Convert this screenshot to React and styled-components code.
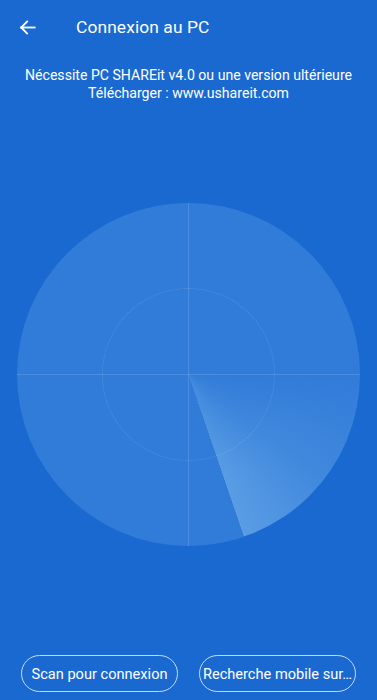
import styled, { createGlobalStyle } from "styled-components";

const GlobalStyle = createGlobalStyle`
  html, body {
    margin: 0;
    padding: 0;
    background: #1a69d1;
  }
  * { box-sizing: border-box; }
`;

const Screen = styled.div`
  width: 377px;
  height: 700px;
  background: #1a69d1;
  color: #fff;
  font-family: Roboto, "Noto Sans", sans-serif;
  display: flex;
  flex-direction: column;
  overflow: hidden;
`;

const Toolbar = styled.div`
  height: 54px;
  display: flex;
  align-items: center;
  padding-left: 16px;
`;

const BackButton = styled.button`
  width: 22px;
  height: 22px;
  padding: 0;
  border: none;
  background: none;
  color: #fff;
  display: flex;
  align-items: center;
  justify-content: center;
`;

const Title = styled.h1`
  margin: 0 0 0 38px;
  font-size: 17.4px;
  font-weight: 400;
  letter-spacing: 0.1px;
`;

const Info = styled.p`
  margin: 12px 0 0;
  text-align: center;
  font-size: 14.1px;
  line-height: 18px;
`;

const RadarArea = styled.div`
  flex: 1;
  display: flex;
  justify-content: center;
  padding-top: 101px;
`;

const Radar = styled.div`
  position: relative;
  width: 343px;
  height: 343px;
  border-radius: 50%;
  background: #317cd9;
  overflow: hidden;
`;

const Sweep = styled.div`
  position: absolute;
  inset: 0;
  border-radius: 50%;
  background: conic-gradient(
    from 90deg,
    rgba(120, 180, 235, 0) 0deg,
    rgba(120, 180, 235, 0.25) 40deg,
    rgba(130, 190, 240, 0.5) 71deg,
    rgba(0, 0, 0, 0) 71.2deg
  );
  -webkit-mask-image: radial-gradient(circle, rgba(0,0,0,0.45) 0%, #000 45%);
  mask-image: radial-gradient(circle, rgba(0,0,0,0.45) 0%, #000 45%);
`;

const Axis = styled.div`
  position: absolute;
  background: rgba(255, 255, 255, 0.13);
  ${({ $vertical }) =>
    $vertical
      ? "left: 171px; top: 0; bottom: 0; width: 1px;"
      : "top: 171px; left: 0; right: 0; height: 1px;"}
`;

const InnerRing = styled.div`
  position: absolute;
  left: 85px;
  top: 85px;
  width: 173px;
  height: 173px;
  border-radius: 50%;
  border: 1px dotted rgba(255, 255, 255, 0.16);
`;

const Actions = styled.div`
  display: flex;
  justify-content: space-between;
  padding: 0 21px 8px;
`;

const PillButton = styled.button`
  width: 157px;
  height: 37px;
  border: 1px solid rgba(255, 255, 255, 0.75);
  border-radius: 19px;
  background: transparent;
  color: #fff;
  font-family: Roboto, "Noto Sans", sans-serif;
  font-size: 14.6px;
  padding: 0 1px;
  white-space: nowrap;
  overflow: hidden;
  text-overflow: ellipsis;
`;

export default function App() {
  return (
    <>
      <GlobalStyle />
      <Screen>
        <Toolbar>
          <BackButton aria-label="Retour">
            <svg width="19" height="19" viewBox="0 0 24 24" fill="none" stroke="#fff" strokeWidth="2.3" strokeLinecap="square">
              <path d="M21 12H4" />
              <path d="M11.5 4.5L4 12l7.5 7.5" />
            </svg>
          </BackButton>
          <Title>Connexion au PC</Title>
        </Toolbar>
        <Info>
          Nécessite PC SHAREit v4.0 ou une version ultérieure
          <br />
          Télécharger : www.ushareit.com
        </Info>
        <RadarArea>
          <Radar>
            <Sweep />
            <InnerRing />
            <Axis />
            <Axis $vertical />
          </Radar>
        </RadarArea>
        <Actions>
          <PillButton>Scan pour connexion</PillButton>
          <PillButton>Recherche mobile sur…</PillButton>
        </Actions>
      </Screen>
    </>
  );
}
